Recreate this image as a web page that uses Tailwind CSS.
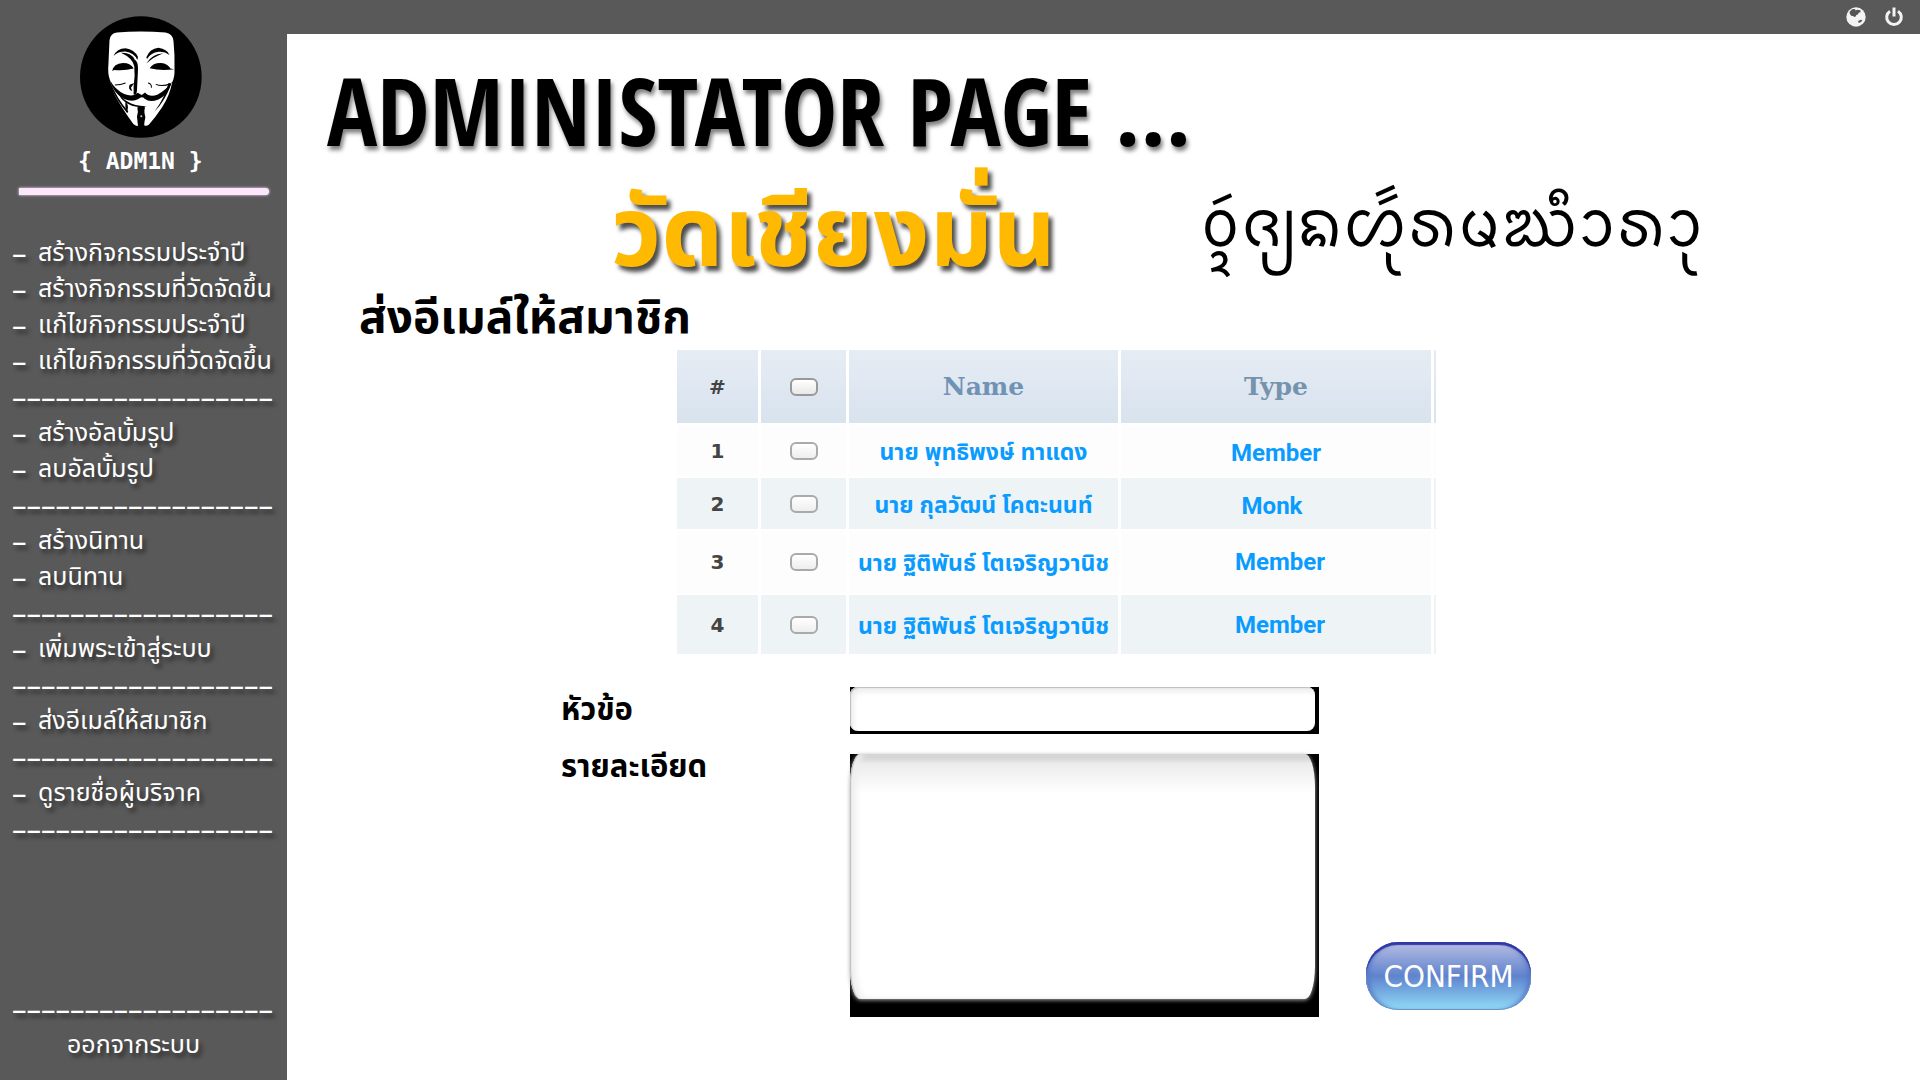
<!DOCTYPE html>
<html lang="th">
<head>
<meta charset="utf-8">
<meta name="viewport" content="width=device-width, initial-scale=1">
<title>Administator Page</title>
<script src="https://cdn.jsdelivr.net/npm/@tailwindcss/browser@4"></script>
</head>
<body class="flex min-h-screen flex-col bg-white font-['Noto_Sans_Thai','Noto_Sans',sans-serif] text-black">

<header class="flex h-[34px] items-center justify-end gap-[18px] bg-[#595959] pr-4">
  <a href="#" aria-label="Website" class="block">
    <svg class="size-5" viewBox="0 0 20 20"><circle cx="10" cy="10" r="9.7" fill="#f3f3f3"/><path d="M3.500 5 6 2.200 9 2l.5 1.500 1.800-.8 3 .6.4 1.600-2 .8-.8 1.800-1.600.6-.6 1.300-1.500.6-1-1.100-1.600.2L4 7.200Zm8.600 9 2.800-1.300 1.500.4-1.300 2-2.300.9Z" fill="#555"/></svg>
  </a>
  <a href="#" aria-label="Power" class="block">
    <svg class="size-5" viewBox="0 0 20 20" fill="none" stroke="#f3f3f3" stroke-width="3"><path d="M6 4.200a7.300 7.300 0 1 0 8 0"/><path d="M10 .5v9"/></svg>
  </a>
</header>

<div class="flex flex-1">
  <aside class="flex w-[287px] shrink-0 flex-col bg-[#595959] text-[25px] text-white">
    <svg class="-mt-[18px] ml-20 size-[122px]" viewBox="240 50 364 364" aria-hidden="true">
      <circle cx="421.500" cy="232" r="181.500" fill="#000"/>
      <path d="M328 122Q330 102 350 99Q420 93 495 99Q517 102 519 125Q523 165 522 208Q523 232 515 248Q507 290 485 322Q465 352 446 374Q440 379 432 377L430 356L414 356L413 378Q402 378 396 368Q362 320 343 284Q332 262 329 240Q322 222 325 190Z" fill="#fff"/>
      <g fill="#000">
        <path d="M340 169Q350 147 376 146Q402 149 413 172L411 181Q402 160 375 156Q353 156 340 169Z"/>
        <path d="M362 160Q392 158 403 180Q414 186 413 210L410 272Q408 288 400 284L400 260Q405 230 402 200Q397 176 362 160Z"/>
        <path d="M438 173Q448 148 474 145Q500 149 507 166Q492 155 474 157Q452 160 440 178Z"/>
        <path d="M438 192Q452 164 489 161Q460 171 438 192Z"/>
        <path d="M336 214Q340 192 368 190Q393 190 400 207Q372 214 342 211Z"/>
        <path d="M448 206Q458 189 482 190Q502 192 510 207L521 209Q480 214 448 206Z"/>
        <path d="M388 255Q382 270 396 274L392 264L402 250Z"/>
        <path d="M329 241Q345 270 372 283Q398 293 412 279L424 286L434 278Q448 294 472 284Q500 268 514 246Q504 284 474 299Q448 309 433 297Q424 288 414 298Q396 308 370 297Q338 279 329 241Z"/>
        <path d="M343 257Q360 308 420 318L439 320Q420 325 395 318Q358 305 343 257Z"/>
        <path d="M330 246Q352 300 384 334L381 340Q348 300 330 258Z"/>
        <path d="M376 306Q388 318 380 334Q373 322 376 306Z"/>
        <path d="M512 252Q496 300 462 336Q494 292 504 250Z"/>
        <path d="M411 323Q424 316 434 323Q430 335 435 352L430 379L413 379L410 350Q415 336 411 323Z"/>
      </g>
      <g fill="none" stroke="#000" stroke-width="3">
        <path d="M443 250Q454 252 453 264"/><path d="M344 256Q362 256 376 250"/><path d="M466 254Q486 262 510 252"/>
      </g>
      <circle cx="423" cy="349" r="3" fill="#ccc"/>
    </svg>
    <p class="ml-[78px] mt-1 h-10 whitespace-pre font-['DejaVu_Sans_Mono',monospace] text-[23px] font-bold leading-[38px]">{ ADM1N }</p>
    <div class="ml-[19px] mr-[18px] mt-[6px] h-[7px] rounded-r-full bg-[#fbe6fb] shadow-[0_0_3px_#fbe6fb]"></div>

    <nav class="mt-10 flex flex-col whitespace-nowrap pl-3 leading-9 [text-shadow:3px_4px_4px_rgba(0,0,0,0.55)]">
      <a href="#" class="flex h-9"><span class="w-[26px] font-['Noto_Sans',sans-serif] text-[29px]">–</span>สร้างกิจกรรมประจำปี</a>
      <a href="#" class="flex h-9"><span class="w-[26px] font-['Noto_Sans',sans-serif] text-[29px]">–</span>สร้างกิจกรรมที่วัดจัดขึ้น</a>
      <a href="#" class="flex h-9"><span class="w-[26px] font-['Noto_Sans',sans-serif] text-[29px]">–</span>แก้ไขกิจกรรมประจำปี</a>
      <a href="#" class="flex h-9"><span class="w-[26px] font-['Noto_Sans',sans-serif] text-[29px]">–</span>แก้ไขกิจกรรมที่วัดจัดขึ้น</a>
      <p class="h-9 font-['Noto_Sans',sans-serif] text-[29px] leading-9">––––––––––––––––––</p>
      <a href="#" class="flex h-9"><span class="w-[26px] font-['Noto_Sans',sans-serif] text-[29px]">–</span>สร้างอัลบั้มรูป</a>
      <a href="#" class="flex h-9"><span class="w-[26px] font-['Noto_Sans',sans-serif] text-[29px]">–</span>ลบอัลบั้มรูป</a>
      <p class="h-9 font-['Noto_Sans',sans-serif] text-[29px] leading-9">––––––––––––––––––</p>
      <a href="#" class="flex h-9"><span class="w-[26px] font-['Noto_Sans',sans-serif] text-[29px]">–</span>สร้างนิทาน</a>
      <a href="#" class="flex h-9"><span class="w-[26px] font-['Noto_Sans',sans-serif] text-[29px]">–</span>ลบนิทาน</a>
      <p class="h-9 font-['Noto_Sans',sans-serif] text-[29px] leading-9">––––––––––––––––––</p>
      <a href="#" class="flex h-9"><span class="w-[26px] font-['Noto_Sans',sans-serif] text-[29px]">–</span>เพิ่มพระเข้าสู่ระบบ</a>
      <p class="h-9 font-['Noto_Sans',sans-serif] text-[29px] leading-9">––––––––––––––––––</p>
      <a href="#" class="flex h-9"><span class="w-[26px] font-['Noto_Sans',sans-serif] text-[29px]">–</span>ส่งอีเมล์ให้สมาชิก</a>
      <p class="h-9 font-['Noto_Sans',sans-serif] text-[29px] leading-9">––––––––––––––––––</p>
      <a href="#" class="flex h-9"><span class="w-[26px] font-['Noto_Sans',sans-serif] text-[29px]">–</span>ดูรายชื่อผู้บริจาค</a>
      <p class="h-9 font-['Noto_Sans',sans-serif] text-[29px] leading-9">––––––––––––––––––</p>
    </nav>

    <div class="mt-auto whitespace-nowrap pb-[18px] pl-3 leading-9 [text-shadow:3px_4px_4px_rgba(0,0,0,0.55)]">
      <p class="h-9 font-['Noto_Sans',sans-serif] text-[29px] leading-9">––––––––––––––––––</p>
      <a href="#" class="ml-[55px] block h-9">ออกจากระบบ</a>
    </div>
  </aside>

  <main class="min-w-0 flex-1 pt-7">
    <h1 class="h-24 whitespace-nowrap pl-10 font-['Open_Sans_Condensed','Roboto_Condensed',sans-serif] text-[94px] font-bold leading-[96px] [text-shadow:2px_4px_4px_rgba(0,0,0,0.5)]">ADMINISTATOR PAGE ...</h1>
    <div class="flex h-[126px] items-end whitespace-nowrap pl-[324px]">
      <p class="w-[589px] text-[98px] font-bold leading-[96px] text-[#ffb900] [text-shadow:4px_5px_4px_rgba(0,0,0,0.7)]">วัดเชียงมั่น</p>
      <p class="font-['Noto_Sans_Tai_Tham','Noto_Sans',serif] text-[66px] leading-[112px]">ᩅᩢ᩠ᨯᨩ᩠ᨿᨦᩉᩩᩢ᩶ᩁᨾᨥᩥᩣᩁᩣᩩ</p>
    </div>
    <h2 class="h-16 pl-[72px] text-[46px] font-bold leading-[70px]">ส่งอีเมล์ให้สมาชิก</h2>

    <table class="ml-[387px] w-[765px] table-fixed border-separate border-spacing-x-[3px] border-spacing-y-[2px] text-center">
      <colgroup><col class="w-[81px]"><col class="w-[85px]"><col class="w-[269px]"><col class="w-[310px]"><col></colgroup>
      <thead>
        <tr class="h-[73px] [&>th]:bg-linear-to-b [&>th]:from-[#e6ecf4] [&>th]:to-[#d8e3ee]">
          <th class="p-0 font-['DejaVu_Sans',sans-serif] text-xl text-[#444]">#</th>
          <th class="p-0"><input type="checkbox" aria-label="Select all" class="mx-auto block h-[18px] w-7 appearance-none rounded-md border-2 border-[#999] bg-linear-to-b from-white to-[#e8e8e8]"></th>
          <th class="p-0 font-['DejaVu_Serif',serif] text-[25px] text-[#6f92b5]">Name</th>
          <th class="p-0 font-['DejaVu_Serif',serif] text-[25px] text-[#7593ad]">Type</th>
          <th class="p-0"></th>
        </tr>
      </thead>
      <tbody class="text-[23px] font-bold text-[#0a9bff] [&>tr:nth-child(even)>td]:bg-[#eef3f6] [&>tr:nth-child(odd)>td]:bg-[#fdfdfd]">
        <tr class="h-[51px]">
          <td class="p-0 font-['DejaVu_Sans',sans-serif] text-xl text-[#444]">1</td>
          <td class="p-0"><input type="checkbox" aria-label="Select 1" class="mx-auto block h-[18px] w-7 appearance-none rounded-md border-2 border-[#aaa] bg-linear-to-b from-white to-[#eee]"></td>
          <td class="whitespace-nowrap p-0 pt-1 leading-8">นาย พุทธิพงษ์ ทาแดง</td>
          <td class="p-0 pt-1 font-['Roboto',sans-serif] text-2xl">Member</td><td class="p-0"></td>
        </tr>
        <tr class="h-[51px]">
          <td class="p-0 font-['DejaVu_Sans',sans-serif] text-xl text-[#444]">2</td>
          <td class="p-0"><input type="checkbox" aria-label="Select 2" class="mx-auto block h-[18px] w-7 appearance-none rounded-md border-2 border-[#aaa] bg-linear-to-b from-white to-[#eee]"></td>
          <td class="whitespace-nowrap p-0 pt-1 leading-8">นาย กุลวัฒน์ โคตะนนท์</td>
          <td class="p-0 pr-2 pt-1 font-['Roboto',sans-serif] text-2xl">Monk</td><td class="p-0"></td>
        </tr>
        <tr class="h-[62px]">
          <td class="p-0 font-['DejaVu_Sans',sans-serif] text-xl text-[#444]">3</td>
          <td class="p-0"><input type="checkbox" aria-label="Select 3" class="mx-auto block h-[18px] w-7 appearance-none rounded-md border-2 border-[#aaa] bg-linear-to-b from-white to-[#eee]"></td>
          <td class="whitespace-nowrap p-0 pt-1 leading-8">นาย ฐิติพันธ์ โตเจริญวานิช</td>
          <td class="p-0 pl-2 font-['Roboto',sans-serif] text-2xl">Member</td><td class="p-0"></td>
        </tr>
        <tr class="h-[59px]">
          <td class="p-0 font-['DejaVu_Sans',sans-serif] text-xl text-[#444]">4</td>
          <td class="p-0"><input type="checkbox" aria-label="Select 4" class="mx-auto block h-[18px] w-7 appearance-none rounded-md border-2 border-[#aaa] bg-linear-to-b from-white to-[#eee]"></td>
          <td class="whitespace-nowrap p-0 pt-1 leading-8">นาย ฐิติพันธ์ โตเจริญวานิช</td>
          <td class="p-0 pl-2 font-['Roboto',sans-serif] text-2xl">Member</td><td class="p-0"></td>
        </tr>
      </tbody>
    </table>

    <form class="mt-[31px] grid grid-cols-[289px_469px_166px] gap-y-5 pb-16 pl-[274px]">
      <label for="subject" class="text-[31px] font-bold leading-[47px]">หัวข้อ</label>
      <div class="h-[47px] bg-black pb-[3px] pr-1">
        <input id="subject" type="text" class="block h-full w-full rounded-lg bg-white px-3 shadow-[inset_1px_1px_1px_#bbb,inset_4px_5px_5px_#eee]">
      </div>
      <span></span>
      <label for="detail" class="text-[31px] font-bold leading-[28px]">รายละเอียด</label>
      <div class="h-[263px] bg-black pb-[18px] pr-1">
        <textarea id="detail" class="block h-full w-full resize-none rounded-[10px/32px] bg-linear-to-b from-[#c4c4c4] from-0% via-[#ececec] via-4% to-white to-16% px-4 py-3 shadow-[inset_1px_0_1px_#bbb,inset_6px_0_6px_#eee,0_1px_4px_#aaa]"></textarea>
      </div>
      <button type="button" class="mb-[7px] ml-[47px] h-[68px] w-[165px] self-end rounded-[32px] bg-linear-to-b from-[#b9bde2] via-[#5f83cd] via-50% to-[#92dcf7] font-['DejaVu_Sans_Condensed','DejaVu_Sans',sans-serif] text-[31px] text-white shadow-[inset_0_3px_1px_#3337a5,inset_0_0_0_1px_#6f93c4,inset_5px_0_5px_-2px_#5577c8,inset_-5px_0_5px_-2px_#5577c8]">CONFIRM</button>
    </form>
  </main>
</div>
</body>
</html>
